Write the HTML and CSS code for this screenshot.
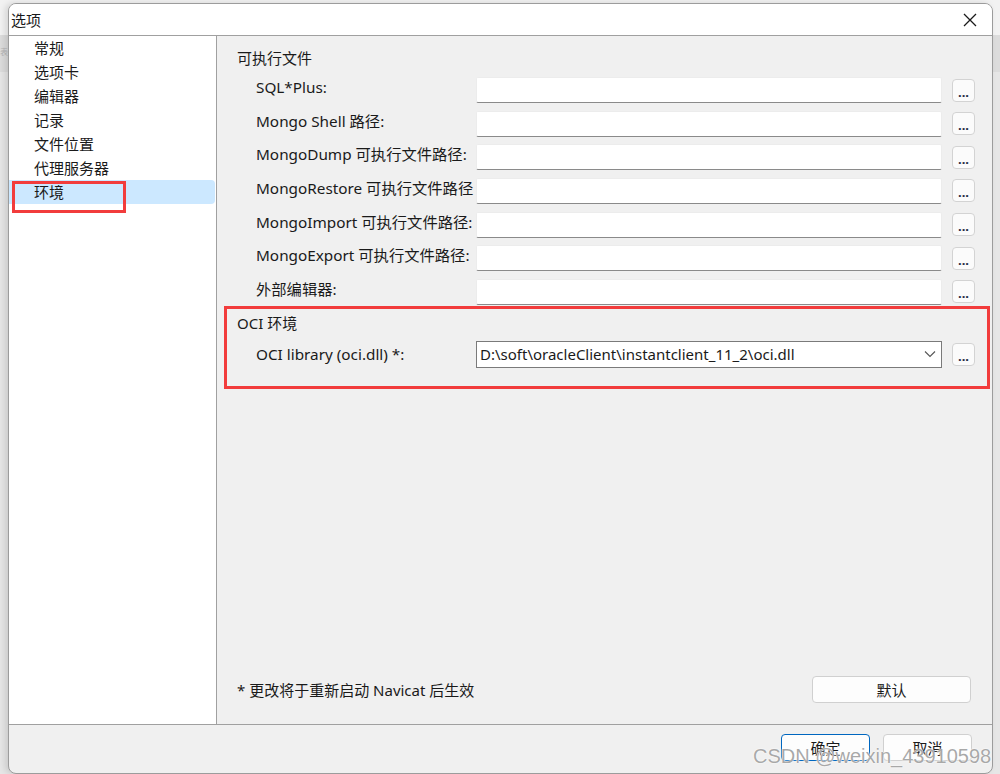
FILE: index.html
```html
<!DOCTYPE html>
<html lang="zh-CN">
<head>
    <meta charset="UTF-8">
    <meta name="viewport" content="width=device-width, initial-scale=1.0">
    <title>选项</title>
    <link rel="stylesheet" href="styles.css">
</head>
<body>
    <div class="backdrop">
        <span class="backdrop-char">表</span>
    </div>

    <div class="dialog">
        <div class="titlebar">
            <span class="title">选项</span>
            <svg class="close" width="14" height="14" viewBox="0 0 14 14">
                <path d="M1 1 L13 13 M13 1 L1 13" stroke="#1a1a1a" stroke-width="1.3" fill="none"/>
            </svg>
        </div>

        <div class="body">
            <ul class="nav">
                <li>常规</li>
                <li>选项卡</li>
                <li>编辑器</li>
                <li>记录</li>
                <li>文件位置</li>
                <li>代理服务器</li>
                <li class="active">环境</li>
            </ul>

            <div class="main">
                <div class="group-title">可执行文件</div>
                <div class="form exec">
                    <label>SQL*Plus:</label>
                    <div class="input"></div>
                    <button class="browse">...</button>

                    <label>Mongo Shell 路径:</label>
                    <div class="input"></div>
                    <button class="browse">...</button>

                    <label>MongoDump 可执行文件路径:</label>
                    <div class="input"></div>
                    <button class="browse">...</button>

                    <label>MongoRestore 可执行文件路径</label>
                    <div class="input"></div>
                    <button class="browse">...</button>

                    <label>MongoImport 可执行文件路径:</label>
                    <div class="input"></div>
                    <button class="browse">...</button>

                    <label>MongoExport 可执行文件路径:</label>
                    <div class="input"></div>
                    <button class="browse">...</button>

                    <label>外部编辑器:</label>
                    <div class="input"></div>
                    <button class="browse">...</button>
                </div>

                <div class="group-title oci-title">OCI 环境</div>
                <div class="form">
                    <label>OCI library (oci.dll) *:</label>
                    <div class="combo">
                        <span>D:\soft\oracleClient\instantclient_11_2\oci.dll</span>
                        <svg width="12" height="8" viewBox="0 0 12 8">
                            <path d="M1 1.5 L6 6.5 L11 1.5" stroke="#555" stroke-width="1.1" fill="none"/>
                        </svg>
                    </div>
                    <button class="browse">...</button>
                </div>

                <div class="note-row">
                    <span class="note">* 更改将于重新启动 Navicat 后生效</span>
                    <button class="btn btn-wide">默认</button>
                </div>
            </div>
        </div>

        <div class="footer">
            <button class="btn btn-primary">确定</button>
            <button class="btn">取消</button>
        </div>

        <div class="mark mark-nav"></div>
        <div class="mark mark-oci"></div>
        <div class="watermark">CSDN @weixin_43910598</div>
    </div>
</body>
</html>
```

FILE: styles.css
```css
:root {
    --panel: #f0f0f0;
    --line: #a0a0a0;
    --text: #1a1a1a;
    --select: #cce8ff;
    --mark: #f23c3c;
}

* {
    box-sizing: border-box;
    margin: 0;
    padding: 0;
}

body {
    width: 1000px;
    height: 774px;
    overflow: hidden;
    background: #e3e3e3;
    font-family: "Noto Sans", "Noto Sans CJK SC", sans-serif;
    font-size: 15px;
    color: var(--text);
    position: relative;
}

.backdrop {
    position: absolute;
    left: 0;
    top: 0;
    width: 1000px;
    height: 774px;
    background: linear-gradient(#f2f2f2 0, #f2f2f2 35px, #dcdcdc 35px, #dcdcdc 72px, #e6e6e6 72px);
}

.backdrop-char {
    position: absolute;
    left: 0;
    top: 46px;
    width: 8px;
    overflow: hidden;
    color: #b5b5b5;
    font-size: 8px;
}

.dialog {
    position: absolute;
    left: 8px;
    top: 3px;
    width: 985px;
    height: 771px;
    background: var(--panel);
    border: 1px solid #9c9c9c;
    border-radius: 8px;
    box-shadow: -3px 0 6px rgba(0, 0, 0, 0.12);
    display: flex;
    flex-direction: column;
    overflow: hidden;
}

.titlebar {
    height: 32px;
    flex: none;
    background: #fff;
    border-bottom: 1px solid var(--line);
    display: flex;
    align-items: center;
    justify-content: space-between;
    padding: 0 15px 0 2px;
}

.title {
    line-height: 20px;
}

.body {
    flex: 1;
    display: flex;
    min-height: 0;
}

.nav {
    list-style: none;
    width: 208px;
    flex: none;
    background: #fff;
    border-right: 1px solid var(--line);
}

.nav li {
    height: 24px;
    line-height: 24px;
    padding-left: 25px;
}

.nav li.active {
    background: var(--select);
    border-radius: 0 4px 4px 0;
    margin-right: 1px;
}

.main {
    flex: 1;
    min-width: 0;
    display: flex;
    flex-direction: column;
    padding: 12px 17px 21px 20px;
}

.group-title {
    line-height: 20px;
    margin-bottom: 9px;
}

.oci-title {
    margin-top: 8px;
    margin-bottom: 8px;
}

.form {
    display: grid;
    grid-template-columns: 220px 466px 23px;
    column-gap: 0;
    row-gap: 7.67px;
    align-items: center;
    margin-left: 19px;
}

.form label {
    line-height: 20px;
    white-space: nowrap;
    font-size: 15.3px;
}

.form.exec label {
    padding-bottom: 6px;
}

.input {
    height: 26px;
    background: #fff;
    border: 1px solid #ececec;
    border-bottom: 1px solid #8a8a8a;
    border-radius: 2px;
}

.combo {
    height: 27px;
    background: #fff;
    border: 1px solid #7a7a7a;
    display: flex;
    align-items: center;
    justify-content: space-between;
    padding: 0 5px 0 3px;
    line-height: 20px;
}

.browse {
    width: 23px;
    height: 23px;
    margin-left: 10px;
    background: #fbfbfb;
    border: 1px solid #d3d3d3;
    border-radius: 4px;
    font-family: "Noto Sans", sans-serif;
    font-size: 13px;
    font-weight: 700;
    line-height: 24px;
    color: #1f2a44;
    text-align: center;
    padding: 0;
}

.note-row {
    margin-top: auto;
    display: flex;
    align-items: center;
    justify-content: space-between;
    padding-right: 4px;
}

.note {
    line-height: 20px;
}

.btn {
    height: 27px;
    width: 89px;
    background: #fdfdfd;
    border: 1px solid #d0d0d0;
    border-radius: 4px;
    font-family: "Noto Sans CJK SC", sans-serif;
    font-size: 15px;
    color: var(--text);
}

.btn-wide {
    width: 159px;
}

.btn-primary {
    border-color: #0067c0;
}

.footer {
    height: 49px;
    flex: none;
    border-top: 1px solid var(--line);
    display: flex;
    align-items: center;
    justify-content: flex-end;
    gap: 13px;
    padding: 0 20px 4px 0;
}

.mark {
    position: absolute;
    border: 3px solid var(--mark);
}

.mark-nav {
    left: 3px;
    top: 177px;
    width: 114px;
    height: 32px;
}

.mark-oci {
    left: 215px;
    top: 302px;
    width: 766px;
    height: 83px;
}

.watermark {
    position: absolute;
    left: 744px;
    top: 738px;
    font-family: "Liberation Sans", sans-serif;
    font-size: 20px;
    line-height: 28px;
    color: rgba(140, 140, 140, 0.75);
    text-shadow: 0 0 2px #fff, 0 0 1px #fff;
    white-space: nowrap;
}
```
